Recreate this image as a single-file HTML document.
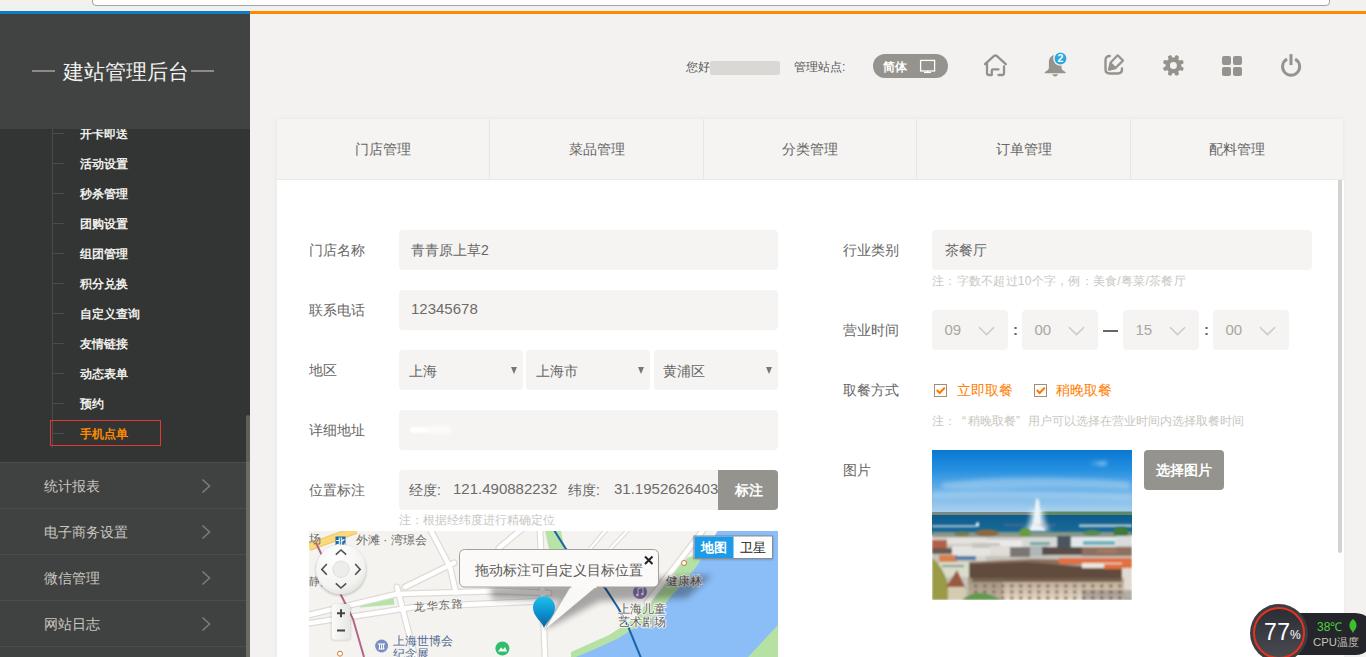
<!DOCTYPE html>
<html><head><meta charset="utf-8">
<style>
*{margin:0;padding:0;box-sizing:border-box}
html,body{width:1366px;height:657px;overflow:hidden;background:#f3f2f0;font-family:"Liberation Sans",sans-serif;}
.a{position:absolute}
.t{position:absolute;white-space:nowrap;line-height:1}
#chrome{left:0;top:0;width:1366px;height:11px;background:#f1f1ef}
#addr{left:92px;top:-6px;width:1238px;height:12px;background:#fff;border:1px solid #a3a3a1;border-radius:4px}
#lineb{left:0;top:11px;width:250px;height:3px;background:#0f7dc3}
#lineo{left:250px;top:11px;width:1116px;height:3px;background:#ff8a00}
#side{left:0;top:14px;width:250px;height:643px;background:#323533;overflow:hidden}
#shead{left:0;top:0;width:250px;height:115px;background:#414342}
.dash{position:absolute;height:2px;background:#8f8a84;width:23px}
#title{left:63px;top:47px;font-size:21px;color:#f4f2ee;letter-spacing:0px}
.sub{position:absolute;left:80px;font-size:12px;font-weight:bold;color:#f0efeb}
.tick{position:absolute;left:53px;width:11px;height:1px;background:#4c4b48}
#vline{left:52px;top:114px;width:1px;height:320px;background:#4c4b48}
.menu{position:absolute;left:0;width:246px;height:46px;background:#404241;border-top:1px solid #4d4c4a}
.menu span{position:absolute;left:44px;top:16px;font-size:14px;color:#c9c6c0;line-height:1;white-space:nowrap}
.menu svg{position:absolute;left:201px;top:15px}
#sscroll{left:246px;top:401px;width:4px;height:260px;background:linear-gradient(#605f5a 0,#605f5a 47px,#6b6a65 47px);border-radius:2px 2px 0 0}
.hdtxt{font-size:12px;color:#555;margin-top:1px}
#card{left:277px;top:119px;width:1066px;height:540px;background:#fff;box-shadow:0 0 6px rgba(0,0,0,0.05)}
#tabs{left:0;top:0;width:1066px;height:61px;background:#f5f4f2;border-bottom:1px solid #ebe9e6}
.tab{position:absolute;top:0;height:60px;border-right:1px solid #e8e6e3}
.tab span{position:absolute;left:0;right:0;top:23px;text-align:center;font-size:14px;color:#666;line-height:1}
.lbl{position:absolute;font-size:14px;color:#666;line-height:1;white-space:nowrap}
.inp{position:absolute;height:40px;background:#f5f4f2;border-radius:4px}
.inp span{position:absolute;top:13px;font-size:14px;color:#666;line-height:1;white-space:nowrap}
.inp span.dg{font-size:15px;top:11px;color:#6d6b67}
.note{position:absolute;font-size:12px;color:#c9c7c2;line-height:1;white-space:nowrap}
.arr{position:absolute;top:16.5px;width:0;height:0;border-left:3.5px solid transparent;border-right:3.5px solid transparent;border-top:7px solid #777}
.tsel{position:absolute;top:310px;width:76px;height:40px;background:#f5f4f2;border-radius:4px}
.tsel span{position:absolute;left:12.5px;top:11.5px;font-size:15px;color:#a9a7a1;line-height:1}
.tsel svg{position:absolute;left:46px;top:16px}
.colon{position:absolute;font-size:15px;color:#666;font-weight:bold;line-height:1}
.cb{width:13px;height:13px;border:1px solid #a58c72;background:#fff}
.cb svg{position:absolute;left:-1px;top:-1px}
.btn{position:absolute;background:#95938d;border-radius:4px;color:#fff;font-size:14px}
</style></head><body>
<div id="chrome" class="a"></div>
<div id="addr" class="a"></div>
<div id="lineb" class="a"></div>
<div id="lineo" class="a"></div>

<div id="side" class="a">
  <div id="vline" class="a"></div>
  <div class="tick" style="top:119px"></div><div class="sub t" style="top:114px">开卡即送</div>
  <div class="tick" style="top:149px"></div><div class="sub t" style="top:144px">活动设置</div>
  <div class="tick" style="top:179px"></div><div class="sub t" style="top:174px">秒杀管理</div>
  <div class="tick" style="top:209px"></div><div class="sub t" style="top:204px">团购设置</div>
  <div class="tick" style="top:239px"></div><div class="sub t" style="top:234px">组团管理</div>
  <div class="tick" style="top:269px"></div><div class="sub t" style="top:264px">积分兑换</div>
  <div class="tick" style="top:299px"></div><div class="sub t" style="top:294px">自定义查询</div>
  <div class="tick" style="top:329px"></div><div class="sub t" style="top:324px">友情链接</div>
  <div class="tick" style="top:359px"></div><div class="sub t" style="top:354px">动态表单</div>
  <div class="tick" style="top:389px"></div><div class="sub t" style="top:384px">预约</div>
  <div class="tick" style="top:419px"></div><div class="sub t" style="top:414px;color:#ff8a00">手机点单</div>
  <div class="a" style="left:50px;top:406px;width:111px;height:26px;border:1px solid #e03a30"></div>
  <div id="shead" class="a">
    <div class="dash" style="left:32px;top:56px"></div>
    <div id="title" class="t">建站管理后台</div>
    <div class="dash" style="left:191px;top:56px"></div>
  </div>
  <div class="menu" style="top:448px"><span>统计报表</span><svg width="10" height="16" viewBox="0 0 10 16"><path d="M1.5 1.5 L8.5 8 L1.5 14.5" fill="none" stroke="#7d7b76" stroke-width="1.6"/></svg></div>
  <div class="menu" style="top:494px"><span>电子商务设置</span><svg width="10" height="16" viewBox="0 0 10 16"><path d="M1.5 1.5 L8.5 8 L1.5 14.5" fill="none" stroke="#7d7b76" stroke-width="1.6"/></svg></div>
  <div class="menu" style="top:540px"><span>微信管理</span><svg width="10" height="16" viewBox="0 0 10 16"><path d="M1.5 1.5 L8.5 8 L1.5 14.5" fill="none" stroke="#7d7b76" stroke-width="1.6"/></svg></div>
  <div class="menu" style="top:586px"><span>网站日志</span><svg width="10" height="16" viewBox="0 0 10 16"><path d="M1.5 1.5 L8.5 8 L1.5 14.5" fill="none" stroke="#7d7b76" stroke-width="1.6"/></svg></div>
  <div class="menu" style="top:632px"></div>
  <div id="sscroll" class="a"></div>
</div>

<!-- header -->
<div class="t hdtxt" style="left:686px;top:60px">您好</div>
<div class="a" style="left:710px;top:61px;width:70px;height:14px;background:#d9d8d4;border-radius:2px;filter:blur(0.6px)"></div>
<div class="t hdtxt" style="left:794px;top:60px">管理站点:</div>
<div class="a" style="left:873px;top:54px;width:75px;height:24px;border-radius:12px;background:#95938d"></div>
<div class="t" style="left:883px;top:61px;font-size:12px;color:#fff;font-weight:bold">简体</div>
<svg class="a" style="left:915px;top:55px" width="26" height="22" viewBox="0 0 26 22"><rect x="5.6" y="5.4" width="14" height="10.6" fill="none" stroke="#fff" stroke-width="1.3"/><rect x="11.8" y="16" width="1.6" height="1" fill="#fff"/><rect x="9" y="16.8" width="7" height="1.3" fill="#fff"/></svg>
<svg class="a" style="left:980px;top:50px" width="30" height="30" viewBox="0 0 30 30" fill="none" stroke="#93918b" stroke-width="2.3" stroke-linecap="round" stroke-linejoin="round"><path d="M5 14.2 L13.8 6.1 Q15.4 4.7 17 6.1 L25.8 14.2"/><path d="M7 13.5 V23 Q7 25 9 25 H11.8 V20.5 Q11.8 19.3 13 19.3 H18.5"/><path d="M18.5 25 H22 Q24 25 24 23 V16.5"/></svg>
<svg class="a" style="left:1040px;top:50px" width="30" height="30" viewBox="0 0 30 30"><path d="M15.2 5 C11.2 5 8.9 8.3 8.9 12.5 L8.9 17.8 C8.9 19.8 6.5 21.2 4.8 22.3 L4.8 23.2 L25.6 23.2 L25.6 22.3 C23.9 21.2 21.5 19.8 21.5 17.8 L21.5 12.5 C21.5 8.3 19.2 5 15.2 5 Z" fill="#95938d"/><path d="M12 24.2 Q15.2 28.6 18.2 24.2 Z" fill="#95938d"/><circle cx="20.5" cy="8.5" r="6.6" fill="#2aa8e0" stroke="#f3f2f0" stroke-width="1.4"/><text x="20.5" y="12.2" font-size="10.5" font-weight="bold" fill="#fff" text-anchor="middle" font-family="Liberation Sans">2</text></svg>
<svg class="a" style="left:1100px;top:50px" width="30" height="30" viewBox="0 0 30 30" fill="none" stroke="#95938d" stroke-width="2.4" stroke-linecap="round" stroke-linejoin="round"><path d="M9.8 6 Q5.5 6 5.5 10.2 V19.3 Q5.5 23.5 9.7 23.5 H17.8 Q22 23.5 22 19.3 V18.5"/><path d="M17.7 5.3 L23 10.6 L16 17.5 L9.3 19.4 L10.9 12.3 Z" stroke-width="2.2"/><path d="M9.2 19.5 L10.6 13.4 L15.4 18 Z" fill="#95938d"/></svg>
<svg class="a" style="left:1158px;top:50px" width="30" height="30" viewBox="0 0 30 30"><path fill="#95938d" stroke="#95938d" stroke-width="2" stroke-linejoin="round" fill-rule="evenodd" d="M16.95 8.57 L18.29 6.14 L19.90 6.81 L19.13 9.48 L21.32 11.67 L23.99 10.90 L24.66 12.51 L22.23 13.85 L22.23 16.95 L24.66 18.29 L23.99 19.90 L21.32 19.13 L19.13 21.32 L19.90 23.99 L18.29 24.66 L16.95 22.23 L13.85 22.23 L12.51 24.66 L10.90 23.99 L11.67 21.32 L9.48 19.13 L6.81 19.90 L6.14 18.29 L8.57 16.95 L8.57 13.85 L6.14 12.51 L6.81 10.90 L9.48 11.67 L11.67 9.48 L10.90 6.81 L12.51 6.14 L13.85 8.57 Z M15.40 10.90 A4.5 4.5 0 1 0 15.40 19.90 A4.5 4.5 0 1 0 15.40 10.90 Z"/></svg>
<svg class="a" style="left:1218px;top:52px" width="30" height="30" viewBox="0 0 30 30" fill="#95938d"><rect x="4" y="4" width="9" height="9" rx="2"/><rect x="15" y="4" width="9" height="9" rx="2"/><rect x="4" y="15" width="9" height="9" rx="2"/><rect x="15" y="15" width="9" height="9" rx="2"/></svg>
<svg class="a" style="left:1276px;top:50px" width="30" height="30" viewBox="0 0 30 30" fill="none" stroke="#95938d" stroke-width="2.9"><path d="M11.1 9.1 A8.55 8.55 0 1 0 19.1 9.1"/><rect x="13.5" y="4.1" width="3" height="11" fill="#95938d" stroke="none"/></svg>

<!-- card -->
<div id="card" class="a">
  <div id="tabs" class="a">
    <div class="tab" style="left:0;width:213px"><span>门店管理</span></div>
    <div class="tab" style="left:213px;width:214px"><span>菜品管理</span></div>
    <div class="tab" style="left:427px;width:213px"><span>分类管理</span></div>
    <div class="tab" style="left:640px;width:214px"><span>订单管理</span></div>
    <div class="tab" style="left:854px;width:212px;border-right:0"><span>配料管理</span></div>
  </div>
</div>
<div class="a" style="left:1343px;top:180px;width:1px;height:480px;background:#fff"></div>
<div class="a" style="left:1338px;top:180px;width:4px;height:373px;background:#d3d2ce;border-radius:0 0 2px 2px"></div>

<!-- left form -->
<div class="lbl" style="left:309px;top:243px">门店名称</div>
<div class="inp" style="left:399px;top:230px;width:379px"><span style="left:12px">青青原上草2</span></div>
<div class="lbl" style="left:309px;top:303px">联系电话</div>
<div class="inp" style="left:399px;top:290px;width:379px"><span class="dg" style="left:12px">12345678</span></div>
<div class="lbl" style="left:309px;top:363px">地区</div>
<div class="inp" style="left:399px;top:350px;width:124px"><span style="left:10px;top:14px">上海</span><i class="arr" style="left:112px"></i></div>
<div class="inp" style="left:526px;top:350px;width:124px"><span style="left:10px;top:14px">上海市</span><i class="arr" style="left:112px"></i></div>
<div class="inp" style="left:654px;top:350px;width:124px"><span style="left:9px;top:14px">黄浦区</span><i class="arr" style="left:112px"></i></div>
<div class="lbl" style="left:309px;top:423px">详细地址</div>
<div class="inp" style="left:399px;top:410px;width:379px"><i class="a" style="left:11px;top:17px;width:20px;height:6px;background:#fff;border-radius:3px;filter:blur(1px)"></i><i class="a" style="left:30px;top:16px;width:22px;height:8px;background:#fbfaf9;filter:blur(1.5px)"></i></div>
<div class="lbl" style="left:309px;top:483px">位置标注</div>
<div class="inp" style="left:399px;top:470px;width:379px"><span style="left:10px">经度:</span><span class="dg" style="left:54px">121.490882232</span><span style="left:169px">纬度:</span><span class="dg" style="left:215px">31.1952626403</span></div>
<div class="btn" style="left:718px;top:470px;width:60px;height:40px;border-radius:0 4px 4px 0"></div>
<div class="t" style="left:735px;top:483px;font-size:14px;color:#fff;font-weight:bold">标注</div>
<div class="note" style="left:399px;top:514px">注：根据经纬度进行精确定位</div>
<svg class="a" style="left:309px;top:531px" width="469" height="126" viewBox="0 0 469 126">
<defs>
<radialGradient id="navg" cx="0.4" cy="0.3" r="0.8"><stop offset="0" stop-color="#ffffff"/><stop offset="0.7" stop-color="#f3f3f1"/><stop offset="1" stop-color="#dcdcd8"/></radialGradient>
<linearGradient id="zg" x1="0" y1="0" x2="1" y2="0"><stop offset="0" stop-color="#fbfbfa"/><stop offset="1" stop-color="#e6e6e3"/></linearGradient>
<linearGradient id="pin" x1="0" y1="0" x2="0" y2="1"><stop offset="0" stop-color="#1cc0f0"/><stop offset="0.6" stop-color="#0a8ac8"/><stop offset="1" stop-color="#0a5f9a"/></linearGradient>
<linearGradient id="tail" x1="0" y1="0" x2="1" y2="1"><stop offset="0" stop-color="#f4f4f3"/><stop offset="1" stop-color="#ffffff"/></linearGradient>
<filter id="bl3"><feGaussianBlur stdDeviation="3"/></filter>
<filter id="bl1"><feGaussianBlur stdDeviation="1.2"/></filter>
</defs>
<rect width="469" height="126" fill="#f5f3f0"/>
<!-- green areas -->
<path d="M236 0 L252 0 L256 20 L240 18 Z" fill="#b7e3a6"/>
<path d="M378 27 L396 21 L469 0 L469 126 L262 126 L262 121 L300 104 L325 88 L344 63 Z" fill="#b5e2a4"/>
<path d="M469 94 L469 126 L439 126 Z" fill="#b5e2a4"/>
<path d="M50 71.6 L84.4 65.8 L85.4 73.6 L51 76.6 Z" fill="#b6e4a6"/>
<!-- river -->
<path d="M408.6 0 L469 0 L469 94 L439 126 L266.8 126 L284 118.9 L309 107.4 L324.3 97.8 L337.7 92 L351 80.5 L360.7 67.1 L376 49.8 L387.5 35.5 L395.2 23 Z" fill="#8bbdf7"/>
<!-- roads (outline then fill) -->
<g fill="none" stroke="#dedbd6" stroke-width="7" stroke-linecap="round" stroke-linejoin="round">
<path d="M-5 85 L88 63 L190 60 L240 62"/>
<path d="M-5 93 L106 76 L236 70"/>
<path d="M88 56 L106 126"/>
<path d="M121 -2 L141 36 L147 62"/>
<path d="M96 56 L145 32"/>
<path d="M190 17 L213 -2"/>
<path d="M231 -2 L236 126"/>
<path d="M395 -2 L338 72"/>
</g>
<g fill="none" stroke="#ffffff" stroke-width="4.6" stroke-linecap="round" stroke-linejoin="round">
<path d="M-5 85 L88 63 L190 60 L240 62"/>
<path d="M-5 93 L106 76 L236 70"/>
<path d="M88 56 L106 126"/>
<path d="M121 -2 L141 36 L147 62"/>
<path d="M96 56 L145 32"/>
<path d="M190 17 L213 -2"/>
<path d="M231 -2 L236 126"/>
<path d="M395 -2 L338 72"/>
</g>
<path d="M281 18 L297 -1 M301 18 L319 -1" stroke="#dcd9d4" stroke-width="4.5" fill="none"/><path d="M281 18 L297 -1 M301 18 L319 -1" stroke="#fff" stroke-width="2.5" fill="none"/>
<path d="M0 16 L47 -1" stroke="#f0c560" stroke-width="8"/>
<path d="M0 16 L47 -1" stroke="#fbd97c" stroke-width="6"/>
<!-- metro lines -->
<path d="M7 12 L33 66 L44 88 L55 126" stroke="#b2668a" stroke-width="2" fill="none"/>
<path d="M245 -1 L257 18 L296.5 57.5 L309 76.7 L318.5 94 L332 127" stroke="#1a64a8" stroke-width="2" fill="none"/>
<!-- labels -->
<g font-family="Liberation Sans" font-size="12" fill="#6b6a66">
<text x="0" y="12">场</text>
<text x="47" y="13">外滩 · 湾璟会</text>
<text x="0" y="54" font-size="11">静安</text>
<text x="357" y="54" font-size="12" fill="#5f5d58" stroke="#f8f8f6" stroke-width="1.6" paint-order="stroke">健康林</text>
<text x="309" y="81.5" font-size="12" fill="#5f5d58" stroke="#f8f8f6" stroke-width="1.6" paint-order="stroke">上海儿童</text>
<text x="309" y="94.5" font-size="12" fill="#5f5d58" stroke="#f8f8f6" stroke-width="1.6" paint-order="stroke">艺术剧场</text>
<text x="105" y="80" font-size="11" letter-spacing="1.6" transform="rotate(-4 105 80)">龙华东路</text>
<text x="84.4" y="113.5" font-size="12" fill="#4f6890">上海世博会</text>
<text x="84.4" y="126.5" font-size="12" fill="#4f6890">纪念展</text>
</g>
<circle cx="72.6" cy="115" r="6.5" fill="#7b8fc2"/>
<path d="M69 113 H76 M69.5 118 H75.5 M70.5 113 V118 M72.6 113 V118 M74.6 113 V118" stroke="#fff" stroke-width="1"/>
<circle cx="193.4" cy="117.5" r="7" fill="#2fbf6c"/>
<path d="M189 120.5 L192 116.5 L194 118.5 L196 116 L198 120.5 Z" fill="#fff"/>
<circle cx="31" cy="122.7" r="2.5" fill="#fff" stroke="#c8793a" stroke-width="1"/>
<circle cx="375" cy="32" r="2.5" fill="#fff" stroke="#c8793a" stroke-width="1"/>
<circle cx="331" cy="61" r="7" fill="#8f78c0"/><path d="M329 64 V57.5 L334 56.5 V63" stroke="#fff" stroke-width="1" fill="none"/><circle cx="328.3" cy="64" r="1.3" fill="#fff"/><circle cx="333.3" cy="63" r="1.3" fill="#fff"/>
<!-- metro badge -->
<rect x="26.5" y="5.5" width="10" height="9.5" fill="#1a6aa8"/>
<text x="31.5" y="13.8" font-size="8.5" font-weight="bold" fill="#fff" text-anchor="middle" font-family="Liberation Sans">北</text>
<!-- nav control -->
<circle cx="32" cy="39.5" r="25.5" fill="#000" opacity="0.18" filter="url(#bl1)"/>
<circle cx="32" cy="38.4" r="25" fill="url(#navg)"/>
<circle cx="32" cy="38.2" r="8.2" fill="#ededeb" stroke="#d6d6d3" stroke-width="0.7"/>
<g fill="none" stroke="#505050" stroke-width="1.6">
<path d="M26.8 23.6 L32 19 L37.2 23.6"/>
<path d="M26.8 52.4 L32 57 L37.2 52.4"/>
<path d="M17.8 33 L12.8 38.4 L17.8 43.8"/>
<path d="M46.2 33 L51.2 38.4 L46.2 43.8"/>
</g>
<!-- zoom control -->
<rect x="22.3" y="73.5" width="19.5" height="36" rx="3" fill="#000" opacity="0.15" filter="url(#bl1)"/>
<rect x="22.8" y="73" width="18.3" height="35.7" rx="3" fill="url(#zg)"/>
<path d="M28 82.2 H36 M32 78.2 V86.2 M28 99.5 H36" stroke="#444" stroke-width="2"/>
<!-- info window shadow -->
<path d="M181 56 L403 44 L378 67 L291 70 L239 97 L233 90 L253 70 L183 68 Z" fill="#000" opacity="0.32" filter="url(#bl3)"/>
<!-- marker -->
<path d="M235 97 C233 90 224 86 224 76.5 A11 11 0 0 1 246 76.5 C246 86 237 90 235 97 Z" fill="url(#pin)"/>
<!-- info window -->
<path d="M262 55 L288 55 L235.5 99 Z" fill="url(#tail)" stroke="#c9c5bf" stroke-width="0.5"/>
<rect x="150.5" y="18.5" width="199" height="37.5" rx="5" fill="#fbfaf9" stroke="#a49f98" stroke-width="1"/>
<rect x="262.5" y="54" width="25" height="3" fill="#fbfaf9"/>
<text x="166" y="44" font-family="Liberation Sans" font-size="14" fill="#5a5955">拖动标注可自定义目标位置</text>
<path d="M336 25.5 L343.5 33 M343.5 25.5 L336 33" stroke="#222" stroke-width="2"/>
<!-- map type -->
<rect x="384.5" y="5.5" width="79.5" height="23" fill="#000" opacity="0.25" filter="url(#bl1)"/>
<rect x="385" y="5" width="78.5" height="22.5" fill="#fff" stroke="#8c8c8c" stroke-width="1"/>
<rect x="385.5" y="5.5" width="39" height="21.5" fill="#1d9be8"/>
<text x="405" y="21" font-family="Liberation Sans" font-size="13" font-weight="bold" fill="#fff" text-anchor="middle">地图</text>
<text x="444" y="21" font-family="Liberation Sans" font-size="13" fill="#222" text-anchor="middle">卫星</text>
</svg>

<!-- right form -->
<div class="lbl" style="left:843px;top:243px">行业类别</div>
<div class="inp" style="left:932px;top:230px;width:380px"><span style="left:13px">茶餐厅</span></div>
<div class="note" style="left:932px;top:275px;letter-spacing:0.25px">注：字数不超过10个字，例：美食/粤菜/茶餐厅</div>
<div class="lbl" style="left:843px;top:323px">营业时间</div>
<div class="lbl" style="left:843px;top:383px">取餐方式</div>
<div class="tsel" style="left:932px"><span>09</span><svg width="17" height="10" viewBox="0 0 17 10"><path d="M1 1.2 L8.5 8.6 L16 1.2" fill="none" stroke="#cdcbc6" stroke-width="1.6"/></svg></div>
<div class="colon" style="left:1013px;top:322px">:</div>
<div class="tsel" style="left:1022px"><span>00</span><svg width="17" height="10" viewBox="0 0 17 10"><path d="M1 1.2 L8.5 8.6 L16 1.2" fill="none" stroke="#cdcbc6" stroke-width="1.6"/></svg></div>
<div class="a" style="left:1103px;top:330px;width:15px;height:2px;background:#666"></div>
<div class="tsel" style="left:1123px"><span>15</span><svg width="17" height="10" viewBox="0 0 17 10"><path d="M1 1.2 L8.5 8.6 L16 1.2" fill="none" stroke="#cdcbc6" stroke-width="1.6"/></svg></div>
<div class="colon" style="left:1204px;top:322px">:</div>
<div class="tsel" style="left:1213px"><span>00</span><svg width="17" height="10" viewBox="0 0 17 10"><path d="M1 1.2 L8.5 8.6 L16 1.2" fill="none" stroke="#cdcbc6" stroke-width="1.6"/></svg></div>
<div class="a cb" style="left:934px;top:384px"><svg width="13" height="13" viewBox="0 0 13 13"><path d="M3.3 6.6 L5.6 8.9 L10.2 4.3" fill="none" stroke="#ff7800" stroke-width="2.1" stroke-linecap="round"/></svg></div>
<div class="t" style="left:957px;top:383px;font-size:14px;color:#ff8000">立即取餐</div>
<div class="a cb" style="left:1034px;top:384px"><svg width="13" height="13" viewBox="0 0 13 13"><path d="M3.3 6.6 L5.6 8.9 L10.2 4.3" fill="none" stroke="#ff7800" stroke-width="2.1" stroke-linecap="round"/></svg></div>
<div class="t" style="left:1056px;top:383px;font-size:14px;color:#ff8000">稍晚取餐</div>

<div class="note" style="left:932px;top:415px">注：</div><div class="note" style="left:962px;top:415px">“</div><div class="note" style="left:968px;top:415px">稍晚取餐</div><div class="note" style="left:1016px;top:415px">”</div><div class="note" style="left:1028px;top:415px">用户可以选择在营业时间内选择取餐时间</div>
<div class="lbl" style="left:843px;top:463px">图片</div>
<div class="btn" style="left:1144px;top:450px;width:80px;height:40px"></div>
<div class="t" style="left:1156px;top:463px;font-size:14px;color:#fff;font-weight:bold">选择图片</div>

<svg class="a" style="left:932px;top:450px" width="200" height="150" viewBox="0 0 200 150">
<defs>
<linearGradient id="sky" x1="0" y1="0" x2="0" y2="1"><stop offset="0" stop-color="#0a78d3"/><stop offset="0.3" stop-color="#2590e0"/><stop offset="0.62" stop-color="#6cb1e8"/><stop offset="1" stop-color="#b5d6ee"/></linearGradient>
<linearGradient id="lake" x1="0" y1="0" x2="0" y2="1"><stop offset="0" stop-color="#0e5c8e"/><stop offset="1" stop-color="#1a6c98"/></linearGradient>
<linearGradient id="facade" x1="0" y1="0" x2="0" y2="1"><stop offset="0" stop-color="#b8a48e"/><stop offset="1" stop-color="#e6d8c6"/></linearGradient>
<pattern id="win" width="9" height="6" patternUnits="userSpaceOnUse" x="40" y="133"><rect x="2" y="1.5" width="3.5" height="3" fill="#6a5a4c" opacity="0.7"/></pattern>
<filter id="ib" x="-10%" y="-10%" width="120%" height="120%"><feGaussianBlur stdDeviation="0.8"/></filter>
<filter id="ib2" x="-20%" y="-50%" width="140%" height="200%"><feGaussianBlur stdDeviation="2.2"/></filter>
</defs>
<rect width="200" height="66" fill="url(#sky)"/>
<g filter="url(#ib2)">
<path d="M10 33 Q70 26 130 28 Q175 29 198 32 L198 39 Q140 36 80 38 Q30 40 10 38 Z" fill="#cfe6f7" opacity="0.4"/>
<path d="M0 42 Q80 40 200 44 L200 50 Q100 46 0 48 Z" fill="#d6eaf7" opacity="0.35"/>
<path d="M158 13 L176 12 L172 15 Z" fill="#fff" opacity="0.8"/>
</g>
<rect y="62" width="200" height="4" fill="#7a8a80"/>
<rect x="110" y="61.5" width="90" height="5" fill="#5d8a62"/>
<rect y="65" width="200" height="20" fill="url(#lake)"/>
<g filter="url(#ib)">
<rect x="0" y="75.5" width="44" height="1.5" fill="#d6e2e8"/>
<rect x="44" y="72.5" width="3" height="4" fill="#f0f4f6"/>
<rect x="147" y="74.5" width="53" height="2.5" fill="#b8ccd6"/>
<g filter="url(#ib2)"><path d="M98 60 Q101 70 92 81 L118 81 Q110 70 112 60 Z" fill="#e6eef5" opacity="0.8"/></g>
<path d="M104 48.5 Q107 48 107.5 52 L109 76 Q113 79 114 81 L96 81 Q99 77 101 74 Z" fill="#f2f7fb" opacity="0.9"/>
<path d="M72 75 H92 M104 75 H124" stroke="#e07a86" stroke-width="0.9" opacity="0.55"/>
</g>
<g filter="url(#ib)">
<rect y="84" width="200" height="66" fill="#c6c2bc"/>
<path d="M0 82 L200 82 L200 88 L0 88 Z" fill="#8a9688"/>
<ellipse cx="55" cy="83" rx="12" ry="3.5" fill="#8a6a40"/>
<ellipse cx="30" cy="84" rx="8" ry="2.5" fill="#7a7a50"/>
<ellipse cx="93" cy="83" rx="6" ry="5" fill="#6a9a40"/>
<ellipse cx="160" cy="83" rx="9" ry="3" fill="#5a8a50"/>
<ellipse cx="189" cy="82" rx="8" ry="5" fill="#3f7a3a"/>
<rect x="0" y="87" width="200" height="8" fill="#d0ccc6"/>
<rect x="15" y="88" width="40" height="6" fill="#e4e2de"/>
<rect x="55" y="90" width="35" height="8" fill="#e8eaec"/>
<rect x="90" y="88" width="35" height="9" fill="#d6d8d6"/>
<rect x="98" y="92" width="20" height="3" fill="#6aa6a0"/>
<rect x="125" y="86" width="14" height="14" fill="#4a5660"/>
<rect x="139" y="87" width="45" height="12" fill="#e2e8ea"/>
<rect x="151" y="91" width="32" height="4" fill="#6ab0b8"/>
<rect x="184" y="86" width="16" height="10" fill="#d8dcdc"/>
<rect x="0" y="90" width="15" height="8" fill="#b45e46"/>
<rect x="0" y="98" width="20" height="6" fill="#6a5a50"/>
<rect x="20" y="96" width="38" height="10" fill="#e6e4e0"/>
<rect x="40" y="93" width="28" height="5" fill="#c8c4be"/>
<rect x="58" y="96" width="20" height="10" fill="#e0dcd6"/>
<rect x="78" y="97" width="20" height="10" fill="#7a7672"/>
<rect x="98" y="96" width="18" height="10" fill="#b0b6ba"/>
<rect x="110" y="97" width="40" height="8" fill="#5a4e46"/>
<rect x="150" y="97" width="50" height="9" fill="#8e7060"/>
<rect x="165" y="99" width="20" height="4" fill="#a07a60"/>
<rect x="7" y="105" width="18" height="7" fill="#d8804a"/>
<rect x="23" y="106" width="21" height="4" fill="#4a7aa8"/>
<rect x="44" y="106" width="10" height="6" fill="#d8d6d0"/>
<rect x="7" y="112" width="30" height="15" fill="#d8dccb"/>
<rect x="10" y="115" width="22" height="2" fill="#8a9a8a"/>
<path d="M37 112 L100 109 L200 111 L200 114 L37 116 Z" fill="#8a6e5a"/>
<path d="M37 114 L95 112 L130 115 L190 118 L192 130 L37 130 Z" fill="#614c3e"/>
<rect x="127" y="108" width="73" height="6" fill="#e27040"/>
<rect x="150" y="113" width="40" height="5" fill="#ece6de"/>
<rect x="172" y="114" width="28" height="5" fill="#e0703a"/>
<rect x="190" y="118" width="10" height="30" fill="#e0dad2"/>
<rect x="36" y="128" width="156" height="22" fill="url(#facade)"/>
<rect x="40" y="128" width="150" height="4" fill="#5a4636" opacity="0.75"/>
<rect x="40" y="133" width="150" height="17" fill="url(#win)"/>
<rect x="36" y="128" width="35" height="22" fill="#7a6a5a" opacity="0.35"/>
<path d="M0 108 Q14 118 20 150 L0 150 Z" fill="#9a9a46"/>
<path d="M25 120 L14 137 L34 139 Z" fill="#9a5a40"/>
<rect x="16" y="137" width="17" height="13" fill="#d6cab0"/>
<path d="M30 150 Q45 136 70 150 Z" fill="#5e9a50"/>
<rect x="150" y="140" width="50" height="10" fill="#4a4a4a" opacity="0.3"/>
</g>
</svg>
<div class="a" style="left:1296px;top:613px;width:80px;height:42px;background:#24262b;border-radius:0 21px 21px 0"></div>
<div class="a" style="left:1250px;top:604px;width:58px;height:58px;border-radius:50%;background:#3b3d43"></div>
<div class="a" style="left:1253px;top:607px;width:52px;height:52px;border-radius:50%;background:linear-gradient(#2b2d35,#4a4b51);border:2.6px solid #e4331f"></div>
<div class="t" style="left:1264px;top:621px;font-size:23px;color:#fff;font-weight:normal;letter-spacing:0.5px">77</div>
<div class="t" style="left:1290px;top:629px;font-size:12px;color:#fff">%</div>
<div class="t" style="left:1317px;top:621px;font-size:12px;color:#4cd23c">38℃</div>
<svg class="a" style="left:1347px;top:618px" width="12" height="16" viewBox="0 0 12 16"><path d="M6 1 C10 4 11 9 7 13 L6 15 L5 13 C1 9 2 4 6 1 Z" fill="#3ec22c"/></svg>
<div class="t" style="left:1313px;top:637px;font-size:11.3px;color:#c9c2b4">CPU温度</div>
</body></html>
